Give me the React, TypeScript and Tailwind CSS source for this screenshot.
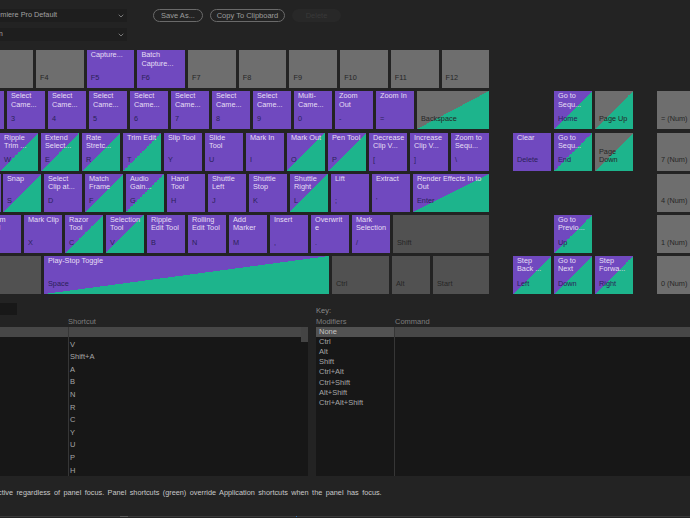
import { ChevronDown } from "lucide-react";

type Kind = "purple" | "diag" | "grey" | "dark" | "greyDiag" | "gap";

interface KeyDef {
  kind: Kind;
  w?: string;
  top?: string;
  label?: string;
  inner?: string;
}

const kindBg: Record<Kind, string> = {
  purple: "bg-[#7049bf]",
  diag: "bg-[linear-gradient(to_bottom_right,#7049bf_50%,#1db48c_50%)]",
  grey: "bg-[#6e6e6e]",
  dark: "bg-[#515151]",
  greyDiag: "bg-[linear-gradient(to_bottom_right,#6e6e6e_50%,#1db48c_50%)]",
  gap: "",
};

const p = (top: string, label: string): KeyDef => ({ kind: "purple", top, label });
const d = (top: string, label: string): KeyDef => ({ kind: "diag", top, label });
const g = (label: string): KeyDef => ({ kind: "grey", label });
const num = (label: string): KeyDef => ({ kind: "grey", label });

const rows: KeyDef[][] = [
  [
    { kind: "grey", w: "w-[33px]" },
    { ...g("F4"), w: "w-[47.7px]" },
    { ...p("Capture...", "F5"), w: "w-[47.7px]" },
    { ...p("Batch\nCapture...", "F6"), w: "w-[47.7px]" },
    { ...g("F7"), w: "w-[47.7px]" },
    { ...g("F8"), w: "w-[47.7px]" },
    { ...g("F9"), w: "w-[47.7px]" },
    { ...g("F10"), w: "w-[47.7px]" },
    { ...g("F11"), w: "w-[47.7px]" },
    { ...g("F12"), w: "w-[47.7px]" },
  ],
  [
    { kind: "purple", w: "w-[4px]" },
    p("Select\nCame...", "3"),
    p("Select\nCame...", "4"),
    p("Select\nCame...", "5"),
    p("Select\nCame...", "6"),
    p("Select\nCame...", "7"),
    p("Select\nCame...", "8"),
    p("Select\nCame...", "9"),
    p("Multi-\nCame...", "0"),
    p("Zoom\nOut", "-"),
    p("Zoom In", "="),
    { kind: "greyDiag", w: "w-[72px]", label: "Backspace" },
    { kind: "gap", w: "w-[59px]" },
    d("Go to\nSequ...", "Home"),
    { kind: "greyDiag", label: "Page Up" },
    { kind: "gap", w: "w-[18px]" },
    num("= (Num)"),
  ],
  [
    d("Ripple\nTrim ...", "W"),
    d("Extend\nSelect...", "E"),
    d("Rate\nStretc...", "R"),
    d("Trim Edit", "T"),
    p("Slip Tool", "Y"),
    p("Slide\nTool", "U"),
    p("Mark In", "I"),
    d("Mark Out", "O"),
    d("Pen Tool", "P"),
    p("Decrease\nClip V...", "["),
    p("Increase\nClip V...", "]"),
    p("Zoom to\nSequ...", "\\"),
    { kind: "gap", w: "w-[18px]" },
    p("Clear", "Delete"),
    d("Go to\nSequ...", "End"),
    { kind: "greyDiag", label: "Page\nDown" },
    { kind: "gap", w: "w-[18px]" },
    num("7 (Num)"),
  ],
  [
    { kind: "purple", w: "w-[1px] -mr-px" },
    d("Snap", "S"),
    p("Select\nClip at...", "D"),
    d("Match\nFrame", "F"),
    d("Audio\nGain...", "G"),
    p("Hand\nTool", "H"),
    p("Shuttle\nLeft", "J"),
    p("Shuttle\nStop", "K"),
    d("Shuttle\nRight", "L"),
    p("Lift", ";"),
    p("Extract", "'"),
    { kind: "diag", w: "w-[76px]", top: "Render Effects In to\nOut", label: "Enter" },
    { kind: "gap", w: "w-[162px]" },
    num("4 (Num)"),
  ],
  [
    { kind: "purple", w: "w-[21px]", top: "Zoom\nTool", inner: "-ml-[17px]" },
    p("Mark Clip", "X"),
    d("Razor\nTool", "C"),
    d("Selection\nTool", "V"),
    p("Ripple\nEdit Tool", "B"),
    p("Rolling\nEdit Tool", "N"),
    p("Add\nMarker", "M"),
    p("Insert", ","),
    p("Overwrit\ne", "."),
    p("Mark\nSelection", "/"),
    { kind: "dark", w: "w-[96px]", label: "Shift" },
    { kind: "gap", w: "w-[59px]" },
    d("Go to\nPrevio...", "Up"),
    { kind: "gap", w: "w-[59px]" },
    num("1 (Num)"),
  ],
  [
    { kind: "dark", w: "w-[41px]" },
    { kind: "diag", w: "w-[285px]", top: "Play-Stop Toggle", label: "Space" },
    { kind: "dark", w: "w-[57px]", label: "Ctrl" },
    { kind: "dark", label: "Alt" },
    { kind: "dark", w: "w-[56px]", label: "Start" },
    { kind: "gap", w: "w-[18px]" },
    d("Step\nBack ...", "Left"),
    d("Go to\nNext", "Down"),
    d("Step\nForwa...", "Right"),
    { kind: "gap", w: "w-[18px]" },
    num("0 (Num)"),
  ],
];

const shortcuts = ["V", "Shift+A", "A", "B", "N", "R", "C", "Y", "U", "P", "H"];
const modifiers = ["Ctrl", "Alt", "Shift", "Ctrl+Alt", "Ctrl+Shift", "Alt+Shift", "Ctrl+Alt+Shift"];

const Key = ({ def }: { def: KeyDef }) => {
  const width = def.w ?? "w-[38px]";
  if (def.kind === "gap") return <div className={`${width} shrink-0`} />;
  const labelColor = def.kind === "purple" || def.kind === "diag" ? "text-[#2b2158]" : "text-[#262626]";
  return (
    <div className={`${width} ${kindBg[def.kind]} h-[38px] shrink-0 overflow-hidden`}>
      <div className={`flex h-full flex-col justify-between whitespace-pre-line pt-[1px] pb-[6px] pl-1 leading-[8.2px] ${def.inner ?? ""}`}>
        <div className="text-[#e6dff5] whitespace-pre">{def.top}</div>
        <div className={labelColor}>{def.label}</div>
      </div>
    </div>
  );
};

const Dropdown = ({ text, inner }: { text: string; inner: string }) => (
  <div className="flex h-[13px] w-[127px] items-center justify-between overflow-hidden bg-[#1e1e1e] pr-[2px] text-[7.3px] text-[#a0a0a0]">
    <span className={`whitespace-nowrap ${inner}`}>{text}</span>
    <ChevronDown size={8} strokeWidth={2.5} className="shrink-0 text-[#8a8a8a]" />
  </div>
);

export default function App() {
  return (
    <div className="flex h-[518px] w-[690px] flex-col overflow-hidden bg-[#232323] font-['Liberation_Sans',sans-serif] text-[7.3px]">
      {/* preset row */}
      <div className="flex flex-col gap-[6px] pt-[9px] text-[7.5px]">
        <div className="flex">
          <Dropdown text="Premiere Pro Default" inner="-ml-[11px]" />
          <div className="ml-[26px] flex h-[13px] gap-[7px] text-[#9c9c9c]">
            <div className="flex w-[50px] items-center justify-center rounded-full border border-[#6a6a6a]">Save As...</div>
            <div className="flex w-[75px] items-center justify-center rounded-full border border-[#6a6a6a]">Copy To Clipboard</div>
            <div className="flex w-[49px] items-center justify-center rounded-full bg-[#282828] text-[#393939]">Delete</div>
          </div>
        </div>
        <Dropdown text="Application" inner="-ml-[33px]" />
      </div>

      {/* keyboard */}
      <div className="mt-[9.4px] flex flex-col gap-[3.1px]">
        {rows.map((row, i) => (
          <div key={i} className="flex gap-[3px]">
            {row.map((def, j) => (
              <Key key={j} def={def} />
            ))}
          </div>
        ))}
      </div>

      {/* shortcut lists */}
      <div className="mt-[9px] flex text-[#a6a6a6] text-[7.5px]">
        <div className="flex w-[308px] flex-col">
          <div className="h-[12px] w-[17px] bg-[#181818]" />
          <div className="h-[12px] pl-[68px] pt-[2px] leading-[10px] text-[#7e7e7e]">Shortcut</div>
          <div className="flex h-[149px] overflow-hidden bg-[#171717]">
            <div className="w-[68px] shrink-0">
              <div className="h-[10px] bg-[#474747]" />
            </div>
            <div className="flex-1 border-l border-[#363636]">
              <div className="h-[10px] bg-[#474747]" />
              <div className="pl-[1px] pt-[1.8px]">
                {shortcuts.map((s) => (
                  <div key={s} className="h-[12.6px] leading-[12.6px]">{s}</div>
                ))}
              </div>
            </div>
            <div className="w-[7px] shrink-0">
              <div className="h-[15px] bg-[#444444]" />
            </div>
          </div>
        </div>
        <div className="ml-[8px] flex flex-1 flex-col">
          <div className="h-[12px] pt-[3px] leading-[10px] text-[#8a8a8a]">Key:</div>
          <div className="h-[12px] pt-[2px] leading-[10px] text-[#7e7e7e] flex">
            <span className="w-[79px]">Modifiers</span>
            <span>Command</span>
          </div>
          <div className="flex h-[149px] bg-[#171717]">
            <div className="w-[78px] shrink-0">
              <div className="h-[10px] bg-[#525252] pl-[3px] leading-[10px] text-[#c4c4c4]">None</div>
              <div className="pl-[3px]">
                {modifiers.map((m) => (
                  <div key={m} className="h-[10.2px] leading-[10.2px]">{m}</div>
                ))}
              </div>
            </div>
            <div className="flex-1 border-l border-[#363636]">
              <div className="h-[10px] bg-[#474747]" />
            </div>
          </div>
        </div>
      </div>

      {/* hint */}
      <div className="mt-[12px] h-[10px] overflow-hidden whitespace-nowrap text-[7.3px] leading-[10px] text-[#c8c8c8] [word-spacing:1.4px]">
        <span className="-ml-[2px] inline-block">ctive regardless of panel focus. Panel shortcuts (green) override Application shortcuts when the panel has focus.</span>
      </div>

      {/* window edge */}
      <div className="mt-[18px] flex h-px bg-[#3a3a3a]">
        <div className="ml-[120px] w-[8px] bg-[#5a5a5a]" />
        <div className="ml-[168px] w-px bg-[#2d6fb0]" />
      </div>
    </div>
  );
}
